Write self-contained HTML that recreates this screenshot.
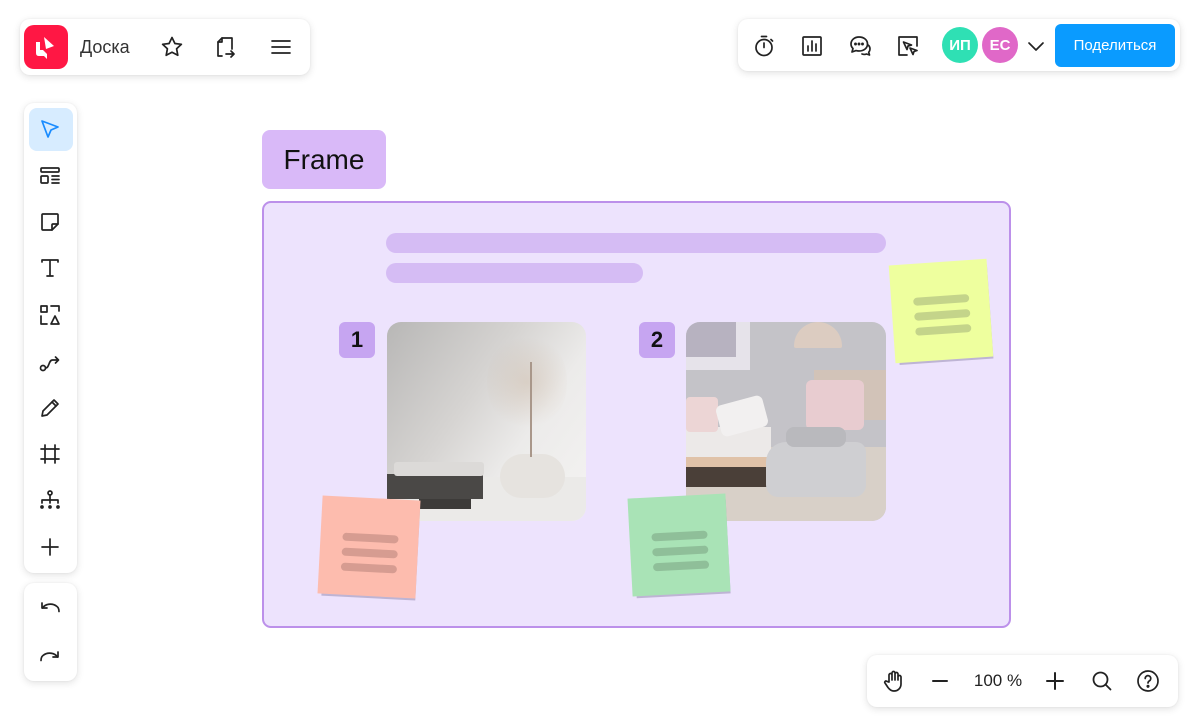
<!DOCTYPE html>
<html><head><meta charset="utf-8"><style>
*{box-sizing:border-box;margin:0;padding:0}
body{width:1200px;height:720px;background:#fff;font-family:"Liberation Sans",sans-serif;position:relative;overflow:hidden;color:#222}
.panel{position:absolute;background:#fff;border-radius:10px;box-shadow:0 2px 8px rgba(0,0,0,.12),0 0 2px rgba(0,0,0,.06)}
.ic{position:absolute;width:24px;height:24px;transform:translate(-50%,-50%)}
.ic svg{width:24px;height:24px;fill:none;stroke:#222;stroke-width:1.7;stroke-linecap:round;stroke-linejoin:round}
.av{position:absolute;width:36px;height:36px;border-radius:50%;color:#fff;font-weight:bold;font-size:15px;display:flex;align-items:center;justify-content:center;top:27px}
.sticky{position:absolute;width:98px;height:98px;box-shadow:2px 4px 0 -2px rgba(120,110,150,.4)}
.sticky i{position:absolute;left:22px;width:56px;height:8px;border-radius:4px}
</style></head><body>

<div class="panel" style="left:20px;top:19px;width:290px;height:56px"></div>
<div style="position:absolute;left:24px;top:25px;width:44px;height:44px;border-radius:10px;background:#ff1744">
<svg width="44" height="44" viewBox="0 0 44 44"><path d="M12 17 V28 Q12 31 15 31 H20 L23 34 V29 L19 25 H16 V17 Z" fill="#fff"/><path d="M20 12 L30 21 L22 24 Z" fill="#fff"/></svg></div>
<div style="position:absolute;left:80px;top:37px;font-size:18px;color:#333">Доска</div>
<div class="ic" style="left:172px;top:47px"><svg viewBox="0 0 24 24"><path d="M12 2.5l2.9 6 6.5.8-4.8 4.5 1.2 6.5L12 17.2l-5.8 3.1 1.2-6.5L2.6 9.3l6.5-.8z"/></svg></div>
<div class="ic" style="left:225px;top:47px"><svg viewBox="0 0 24 24"><path d="M9 21H5V7l4-4h10v11"/><path d="M5 7h4V3"/><path d="M13 19h8M18 16l3 3-3 3"/></svg></div>
<div class="ic" style="left:281px;top:47px"><svg viewBox="0 0 24 24"><path d="M3 6h18M3 12h18M3 18h18"/></svg></div>

<div class="panel" style="left:738px;top:19px;width:442px;height:52px"></div>
<div class="ic" style="left:764px;top:46px"><svg viewBox="0 0 24 24"><circle cx="12" cy="13.5" r="8"/><path d="M12 13.5V9M9.5 2.5h5M19 5.5l1.5 1.5"/></svg></div>
<div class="ic" style="left:812px;top:46px"><svg viewBox="0 0 24 24"><rect x="3" y="3" width="18" height="18" rx="1"/><path d="M8 17v-5M12 17V7M16 17v-7"/></svg></div>
<div class="ic" style="left:860px;top:46px"><svg viewBox="0 0 24 24"><path d="M11 3c5 0 8.5 3 8.5 7s-3.5 7-8.5 7c-1 0-2-.1-3-.4L4 18l1-3.5C3.7 13.3 3 11.7 3 10c0-4 3.5-7 8-7z"/><path d="M20 11c1.5 1 2 2.5 2 4 0 1.3-.5 2.4-1.3 3.3L21.5 21l-3-1c-1.3.6-3 .5-4.5 0"/><circle cx="7.5" cy="10" r=".6" fill="#222"/><circle cx="11" cy="10" r=".6" fill="#222"/><circle cx="14.5" cy="10" r=".6" fill="#222"/></svg></div>
<div class="ic" style="left:908px;top:46px"><svg viewBox="0 0 24 24"><path d="M11 21H3V3h18v9"/><path d="M7.5 8l8 3-3.5 1-1 3.5z"/><path d="M14 14l7 2.5-3 1-1 3z"/></svg></div>
<div class="av" style="left:942px;background:#2fe0b4">ИП</div>
<div class="av" style="left:982px;background:#e068c8">ЕС</div>
<div class="ic" style="left:1036px;top:46px"><svg viewBox="0 0 24 24"><path d="M5 9l7 7 7-7"/></svg></div>
<div style="position:absolute;left:1055px;top:24px;width:120px;height:43px;border-radius:6px;background:#0a9bff;color:#fff;font-size:15px;display:flex;align-items:center;justify-content:center">Поделиться</div>

<div class="panel" style="left:24px;top:103px;width:53px;height:470px"></div>
<div style="position:absolute;left:29px;top:108px;width:44px;height:43px;border-radius:8px;background:#d7ecff"></div>
<div class="ic" style="left:50px;top:129px"><svg viewBox="0 0 24 24" style="stroke:#1a8cff"><path d="M4 4l16 6-7 3-3 7z"/></svg></div>
<div class="ic" style="left:50px;top:176px"><svg viewBox="0 0 24 24"><rect x="3" y="4" width="18" height="4" rx="1"/><rect x="3" y="12" width="7" height="7" rx="1"/><path d="M14 12h7M14 15.5h7M14 19h7"/></svg></div>
<div class="ic" style="left:50px;top:222px"><svg viewBox="0 0 24 24"><path d="M4 5a1 1 0 011-1h14a1 1 0 011 1v9l-6 6H5a1 1 0 01-1-1z"/><path d="M20 14h-5a1 1 0 00-1 1v5"/></svg></div>
<div class="ic" style="left:50px;top:268px"><svg viewBox="0 0 24 24"><path d="M4 6V4h16v2M12 4v16M9 20h6"/></svg></div>
<div class="ic" style="left:50px;top:315px"><svg viewBox="0 0 24 24"><rect x="3" y="3" width="6" height="6"/><path d="M13 3h8v5M3 13v8h6M17 13l4 8h-8z"/></svg></div>
<div class="ic" style="left:50px;top:362px"><svg viewBox="0 0 24 24"><circle cx="5" cy="18" r="2.5"/><path d="M7.5 18c4 0 3-8 7-8h6M17.5 7l3 3-3 3"/></svg></div>
<div class="ic" style="left:50px;top:408px"><svg viewBox="0 0 24 24"><path d="M16 4l4 4L9 19l-5 1 1-5z"/><path d="M14 6l4 4"/></svg></div>
<div class="ic" style="left:50px;top:454px"><svg viewBox="0 0 24 24"><path d="M7 3v18M17 3v18M3 7h18M3 17h18"/></svg></div>
<div class="ic" style="left:50px;top:500px"><svg viewBox="0 0 24 24"><circle cx="12" cy="5" r="2"/><path d="M12 7v5M4 12h16M4 12v3M12 12v3M20 12v3"/><circle cx="4" cy="19" r="1" fill="#222"/><circle cx="12" cy="19" r="1" fill="#222"/><circle cx="20" cy="19" r="1" fill="#222"/></svg></div>
<div class="ic" style="left:50px;top:547px"><svg viewBox="0 0 24 24"><path d="M12 4v16M4 12h16"/></svg></div>

<div class="panel" style="left:24px;top:583px;width:53px;height:98px"></div>
<div class="ic" style="left:50px;top:609px"><svg viewBox="0 0 24 24"><path d="M4 6v5h5"/><path d="M4.5 11C7 7 14 5.5 19 9.5c1.3 1 2 2.5 2 5"/></svg></div>
<div class="ic" style="left:50px;top:655px"><svg viewBox="0 0 24 24"><path d="M20 9v5h-5"/><path d="M19.5 14C17 10 10 8.5 5 12.5c-1.3 1-2 2.5-2 5"/></svg></div>

<div class="panel" style="left:867px;top:655px;width:311px;height:52px"></div>
<div class="ic" style="left:893px;top:681px"><svg viewBox="0 0 24 24"><path d="M8 13V6a1.5 1.5 0 013 0v5V4a1.5 1.5 0 013 0v7V5a1.5 1.5 0 013 0v6-3a1.5 1.5 0 013 0v7c0 4-3 7-7 7-3 0-4.5-1.5-6-3.5L4 14c-.8-1 .5-2.5 1.7-1.7z"/></svg></div>
<div class="ic" style="left:940px;top:681px"><svg viewBox="0 0 24 24"><path d="M5 12h14" stroke-width="2"/></svg></div>
<div style="position:absolute;left:960px;top:671px;width:76px;text-align:center;font-size:17px;color:#222">100 %</div>
<div class="ic" style="left:1055px;top:681px"><svg viewBox="0 0 24 24"><path d="M12 4v16M4 12h16" stroke-width="2"/></svg></div>
<div class="ic" style="left:1102px;top:681px"><svg viewBox="0 0 24 24"><circle cx="10.5" cy="10.5" r="7" stroke-width="1.8"/><path d="M15.5 15.5l5 5" stroke-width="1.8"/></svg></div>
<div class="ic" style="left:1148px;top:681px"><svg viewBox="0 0 24 24"><circle cx="12" cy="12" r="10"/><path d="M9.2 9.5a2.8 2.8 0 115 1.7c-.9.8-2.2 1.3-2.2 2.8"/><circle cx="12" cy="17.3" r=".7" fill="#222"/></svg></div>

<div style="position:absolute;left:262px;top:130px;width:124px;height:59px;border-radius:8px;background:#d9b9f8;font-size:28px;display:flex;align-items:center;justify-content:center;color:#111">Frame</div>
<div style="position:absolute;left:262px;top:201px;width:749px;height:427px;border-radius:9px;background:#ede3fd;border:2px solid #bc90ea"></div>
<div style="position:absolute;left:386px;top:233px;width:500px;height:20px;border-radius:10px;background:#d5bcf4"></div>
<div style="position:absolute;left:386px;top:263px;width:257px;height:20px;border-radius:10px;background:#d5bcf4"></div>

<div style="position:absolute;left:339px;top:322px;width:36px;height:36px;border-radius:6px;background:#c6a5f1;font-size:22px;font-weight:bold;display:flex;align-items:center;justify-content:center;color:#111">1</div>
<div style="position:absolute;left:387px;top:322px;width:199px;height:199px;border-radius:14px;overflow:hidden;background:linear-gradient(125deg,#b8b7b6 0%,#d6d4d2 40%,#ecebea 65%,#f4f3f2 100%)">
 <div style="position:absolute;left:0;top:155px;width:199px;height:44px;background:#ebeae8"></div>
 <div style="position:absolute;left:0;top:152px;width:96px;height:25px;background:#4a4846"></div>
 <div style="position:absolute;left:32px;top:177px;width:52px;height:10px;background:#3d3b39"></div>
 <div style="position:absolute;left:7px;top:140px;width:90px;height:14px;background:#dcdad8;border-radius:3px"></div>
 <div style="position:absolute;left:113px;top:132px;width:65px;height:44px;border-radius:30px 30px 28px 28px;background:#e6e3df"></div>
 <div style="position:absolute;left:100px;top:10px;width:80px;height:100px;border-radius:50%;background:radial-gradient(circle,rgba(200,175,150,.35),rgba(200,175,150,0) 70%)"></div>
 <div style="position:absolute;left:143px;top:40px;width:2px;height:95px;background:#a9978a"></div>
</div>

<div style="position:absolute;left:639px;top:322px;width:36px;height:36px;border-radius:6px;background:#c6a5f1;font-size:22px;font-weight:bold;display:flex;align-items:center;justify-content:center;color:#111">2</div>
<div style="position:absolute;left:686px;top:322px;width:200px;height:199px;border-radius:14px;overflow:hidden;background:#c4c3c8">
 <div style="position:absolute;left:0;top:0;width:64px;height:48px;background:#e6e3ea"></div>
 <div style="position:absolute;left:0;top:0;width:50px;height:35px;background:#b7b2c0"></div>
 <div style="position:absolute;left:108px;top:0;width:48px;height:26px;border-radius:24px 24px 2px 2px;background:#dcccc1"></div>
 <div style="position:absolute;left:0;top:125px;width:200px;height:74px;background:#d8d0c8"></div>
 <div style="position:absolute;left:0;top:105px;width:85px;height:30px;background:#ece9e8"></div>
 <div style="position:absolute;left:0;top:75px;width:32px;height:35px;background:#ecd5d5;border-radius:4px"></div>
 <div style="position:absolute;left:32px;top:78px;width:48px;height:32px;background:#f2f0f0;border-radius:6px;transform:rotate(-15deg)"></div>
 <div style="position:absolute;left:0;top:135px;width:85px;height:10px;background:#e0c2a8"></div>
 <div style="position:absolute;left:0;top:145px;width:85px;height:20px;background:#4a3f38"></div>
 <div style="position:absolute;left:128px;top:48px;width:72px;height:50px;background:#d9c3b0;opacity:.7"></div>
 <div style="position:absolute;left:120px;top:58px;width:58px;height:50px;background:#e8ccd0;border-radius:6px"></div>
 <div style="position:absolute;left:80px;top:120px;width:100px;height:55px;background:#cfcfd2;border-radius:20px 10px 12px 12px"></div>
 <div style="position:absolute;left:100px;top:105px;width:60px;height:20px;background:#b9b9bd;border-radius:8px"></div>
</div>

<div class="sticky" style="left:320px;top:498px;background:#fdbcae;transform:rotate(3deg)"><i style="top:36px;background:#d69c91"></i><i style="top:51px;background:#d69c91"></i><i style="top:66px;background:#d69c91"></i></div>
<div class="sticky" style="left:630px;top:496px;background:#a9e3b6;transform:rotate(-3deg)"><i style="top:36px;background:#8fbf99"></i><i style="top:51px;background:#8fbf99"></i><i style="top:66px;background:#8fbf99"></i></div>
<div class="sticky" style="left:892px;top:262px;background:#eeff9e;transform:rotate(-4deg)"><i style="top:34px;background:#c4d48a"></i><i style="top:49px;background:#c4d48a"></i><i style="top:64px;background:#c4d48a"></i></div>

</body></html>
